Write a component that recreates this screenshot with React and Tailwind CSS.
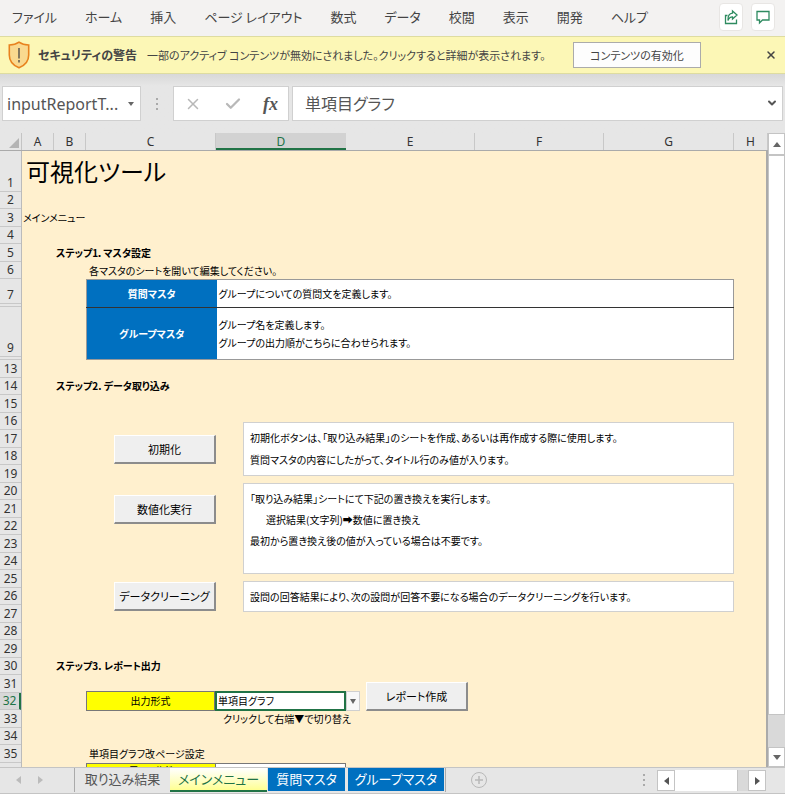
import { ChevronDown, X, Check } from 'lucide-react';

const ribbonTabs = ['ファイル', 'ホーム', '挿入', 'ページ レイアウト', '数式', 'データ', '校閲', '表示', '開発', 'ヘルプ'];

const columns = [
    { name: 'A', width: 'w-8' },
    { name: 'B', width: 'w-8' },
    { name: 'C', width: 'w-[130px]' },
    { name: 'D', width: 'w-[130px]', active: true },
    { name: 'E', width: 'w-[129px]' },
    { name: 'F', width: 'w-[129px]' },
    { name: 'G', width: 'w-[130px]' },
    { name: 'H', width: 'flex-1' },
];

// Rows 8 and 10-12 are hidden on this sheet
const rows = [
    { n: 1, height: 'h-[41px]' },
    { n: 2, height: 'h-[17px]' },
    { n: 3, height: 'h-[18px]' },
    { n: 4, height: 'h-[17px]' },
    { n: 5, height: 'h-[18px]' },
    { n: 6, height: 'h-[17px]' },
    { n: 7, height: 'h-[28px]', hiddenAfter: true },
    { n: 9, height: 'h-[53px]', hiddenAfter: true },
    ...Array.from({ length: 23 }, (_, i) => ({
        n: 13 + i,
        height: i % 2 ? 'h-[17px]' : 'h-[18px]',
        active: 13 + i === 32,
    })),
];

function Ribbon() {
    return (
        <header className="flex h-9 shrink-0 items-center bg-[#f3f2f1] pb-0.5 pl-3 pr-2.5">
            <nav className="flex flex-1 gap-7">
                {ribbonTabs.map((tab) => (
                    <button key={tab} type="button" className="whitespace-nowrap text-[13px] leading-5 text-[#444]">
                        {tab}
                    </button>
                ))}
            </nav>
            <div className="flex gap-2">
                <button type="button" aria-label="共有" className="flex h-7 w-6 items-center justify-center rounded-sm border border-[#e8e6e4] bg-white">
                    <svg viewBox="0 0 16 16" className="h-4 w-4" fill="none" stroke="#2e8b60" strokeWidth="1.3">
                        <path d="M4.500 6.500H2.500v8h11V10.500" />
                        <path d="M9.500 2 14 6 9.500 10V7.800C7.500 7.800 6 8.800 5 11.500 4.800 7.500 6.500 4.500 9.500 4.200Z" />
                    </svg>
                </button>
                <button type="button" aria-label="コメント" className="flex h-7 w-6 items-center justify-center rounded-sm border border-[#e8e6e4] bg-white">
                    <svg viewBox="0 0 16 16" className="h-4 w-4" fill="none" stroke="#2e8b60" strokeWidth="1.3">
                        <path d="M2 2.500h12v8.500H7.500L4.500 14V11H2Z" />
                    </svg>
                </button>
            </div>
        </header>
    );
}

function SecurityBar() {
    return (
        <div className="flex h-[38px] shrink-0 items-center border-y border-[#dedca0] bg-[#fcf7b6] px-2 text-[#444]">
            <svg viewBox="0 0 22 28" className="h-7 w-[22px] shrink-0">
                <path d="M11 1.200C8.500 3 5 4 1.300 4V14c0 6 4 10.500 9.700 12.800C16.700 24.500 20.700 20 20.700 14V4C17 4 13.500 3 11 1.200Z" fill="#f9d98f" stroke="#e8821e" strokeWidth="1.600" />
                <path d="M11 7v10.500M11 19v2.500" stroke="#444" strokeWidth="1.300" />
            </svg>
            <strong className="ml-2 whitespace-nowrap text-xs leading-5">セキュリティの警告</strong>
            <span className="ml-2.5 flex-1 whitespace-nowrap text-[11px] leading-5">
                一部のアクティブ コンテンツが無効にされました。クリックすると詳細が表示されます。
            </span>
            <button type="button" className="h-[26px] w-32 shrink-0 border border-[#ababab] bg-[#fdfdfd] text-[11px] leading-5">
                コンテンツの有効化
            </button>
            <button type="button" aria-label="閉じる" className="ml-16 shrink-0">
                <X className="h-3 w-3" strokeWidth={3} />
            </button>
        </div>
    );
}

function Dots() {
    return (
        <div className="flex flex-col gap-[3px]">
            <i className="h-0.5 w-0.5 bg-[#aaa]" />
            <i className="h-0.5 w-0.5 bg-[#aaa]" />
            <i className="h-0.5 w-0.5 bg-[#aaa]" />
        </div>
    );
}

function FormulaBar() {
    return (
        <div className="flex h-[59px] shrink-0 items-center bg-gradient-to-b from-[#d8d8d8] to-[#e6e6e6] to-20% px-0.5">
            <div className="flex h-[35px] w-[139px] items-center border border-[#d0d0d0] bg-white pl-1 pr-1.5">
                <input
                    aria-label="名前ボックス"
                    defaultValue="inputReportT..."
                    className="w-0 flex-1 bg-transparent font-['Noto_Sans',sans-serif] text-base text-[#555] outline-none"
                />
                <svg viewBox="0 0 6 4" className="h-1 w-1.5">
                    <path d="M0 0h6L3 4Z" fill="#666" />
                </svg>
            </div>
            <div className="flex w-8 justify-center">
                <Dots />
            </div>
            <div className="flex h-[35px] w-[116px] items-center justify-between border border-[#d0d0d0] bg-white px-2.5">
                <button type="button" aria-label="キャンセル">
                    <X className="h-[18px] w-[18px] text-[#b8b8b8]" />
                </button>
                <button type="button" aria-label="入力">
                    <Check className="h-[18px] w-[18px] text-[#b8b8b8]" strokeWidth={3} />
                </button>
                <button type="button" aria-label="関数の挿入" className="font-['Liberation_Serif',serif] text-lg font-bold italic leading-5 text-[#555]">
                    fx
                </button>
            </div>
            <div className="ml-[3px] flex h-[35px] flex-1 items-center border border-[#d0d0d0] bg-white pb-0.5 pl-3 pr-1">
                <input aria-label="数式バー" defaultValue="単項目グラフ" className="w-0 flex-1 bg-transparent text-base text-[#555] outline-none" />
                <ChevronDown className="h-3 w-3 text-[#555]" strokeWidth={4} />
            </div>
        </div>
    );
}

function ColumnHeads() {
    return (
        <div className="flex h-[18px] shrink-0 border-b border-[#aaa] font-['Noto_Sans',sans-serif] text-xs leading-[18px] text-[#333]">
            <div className="flex w-[22px] items-end justify-end border-r border-[#c4c4c4] p-0.5">
                <svg viewBox="0 0 10 10" className="h-2.5 w-2.5">
                    <path d="M10 0v10H0Z" fill="#b4b4b4" />
                </svg>
            </div>
            {columns.map((col) => (
                <div
                    key={col.name}
                    className={`${col.width} text-center ${col.active ? 'border-b-2 border-[#217346] bg-[#d2d2d2] text-[#217346]' : 'border-r border-[#c8c8c8]'}`}
                >
                    {col.name}
                </div>
            ))}
        </div>
    );
}

function RowHeads() {
    return (
        <div className="w-[22px] shrink-0 border-r border-[#bbb] font-['Noto_Sans',sans-serif] text-xs leading-4 text-[#333]">
            {rows.map((row) => (
                <div
                    key={row.n}
                    className={`${row.height} flex items-end justify-center border-[#c8c8c8] ${row.hiddenAfter ? 'border-b-4 border-double' : 'border-b'} ${row.active ? 'border-r-2 border-r-[#217346] bg-[#d8d8d8] text-[#217346]' : ''}`}
                >
                    {row.n}
                </div>
            ))}
        </div>
    );
}

function SheetButton({ children }) {
    return (
        <button
            type="button"
            className="h-[29px] w-[102px] shrink-0 whitespace-nowrap border border-b-2 border-r-2 border-white border-b-[#8c8c8c] border-r-[#8c8c8c] bg-[#efefef] text-[11px] leading-4"
        >
            {children}
        </button>
    );
}

function Note({ children }) {
    return <div className="w-[491px] shrink-0 border border-[#d0d0d0] bg-white px-1.5 py-1 leading-[21px]">{children}</div>;
}

function MasterTable() {
    return (
        <table className="ml-16 w-[648px] border-collapse border border-[#999]">
            <tbody>
                <tr className="h-7 border-b border-[#333]">
                    <th scope="row" className="w-[130px] bg-[#0070c0] text-white">質問マスタ</th>
                    <td className="bg-white pl-0.5">グループについての質問文を定義します。</td>
                </tr>
                <tr className="h-[52px]">
                    <th scope="row" className="bg-[#0070c0] text-white">グループマスタ</th>
                    <td className="bg-white pl-0.5">
                        グループ名を定義します。
                        <br />
                        グループの出力順がこちらに合わせられます。
                    </td>
                </tr>
            </tbody>
        </table>
    );
}

function Sheet() {
    return (
        <main className="min-w-0 flex-1 overflow-hidden whitespace-nowrap border-r-2 border-[#aaa] bg-[#fff0ce] text-[10px] leading-[18px] text-black">
            <h1 className="h-[58px] pl-1 text-2xl leading-10">可視化ツール</h1>
            <p className="h-[35px] pl-px">メインメニュー</p>

            <section>
                <h2 className="pl-[34px] font-bold">ステップ1．マスタ設定</h2>
                <p className="h-[17px] pl-[67px]">各マスタのシートを開いて編集してください。</p>
                <MasterTable />
            </section>

            <section className="pt-[17px]">
                <h2 className="pl-[34px] font-bold">ステップ2. データ取り込み</h2>
                <div className="flex flex-col gap-[7px] pl-[92px] pt-[27px]">
                    <div className="flex items-center gap-[27px]">
                        <SheetButton>初期化</SheetButton>
                        <Note>
                            <p className="leading-[22px]">初期化ボタンは、「取り込み結果」のシートを作成、あるいは再作成する際に使用します。</p>
                            <p className="leading-[22px]">質問マスタの内容にしたがって、タイトル行のみ値が入ります。</p>
                        </Note>
                    </div>
                    <div className="flex gap-[27px]">
                        <div className="pt-3">
                            <SheetButton>数値化実行</SheetButton>
                        </div>
                        <Note>
                            <p>「取り込み結果」シートにて下記の置き換えを実行します。</p>
                            <p className="pl-4">選択結果(文字列)➡数値に置き換え</p>
                            <p className="pb-[18px]">最初から置き換え後の値が入っている場合は不要です。</p>
                        </Note>
                    </div>
                    <div className="flex items-center gap-[27px]">
                        <SheetButton>データクリーニング</SheetButton>
                        <Note>設問の回答結果により、次の設問が回答不要になる場合のデータクリーニングを行います。</Note>
                    </div>
                </div>
            </section>

            <section className="pt-[45px]">
                <h2 className="pl-[34px] font-bold">ステップ3. レポート出力</h2>
                <div className="flex items-end pl-16 pt-[7px]">
                    <label htmlFor="format" className="h-5 w-[129px] border border-[#777] bg-[#ff0] text-center">
                        出力形式
                    </label>
                    <select id="format" className="h-5 w-[131px] appearance-none border-2 border-[#217346] bg-white pl-px leading-4 outline-none">
                        <option>単項目グラフ</option>
                    </select>
                    <span className="mr-1.5 flex h-5 w-3.5 items-center justify-center border border-[#d0d0d0] bg-[#f8f8f8]">
                        <svg viewBox="0 0 6 5" className="h-[5px] w-1.5">
                            <path d="M0 0h6L3 5Z" fill="#666" />
                        </svg>
                    </span>
                    <SheetButton>レポート作成</SheetButton>
                </div>
                <p className="pl-[201px] leading-4">クリックして右端▼で切り替え</p>
                <p className="pl-[67px] pt-[18px]">単項目グラフ改ページ設定</p>
                <div className="flex pl-16 leading-3">
                    <div className="h-5 w-[130px] border border-[#777] bg-[#ff0] text-center">フィールド</div>
                    <div className="h-5 w-[130px] border border-l-0 border-[#777] bg-white" />
                </div>
            </section>
        </main>
    );
}

function VerticalScroll() {
    return (
        <div className="flex w-[17px] shrink-0 flex-col bg-[#d9d9d9]">
            <button type="button" aria-label="上へ" className="flex h-[22px] items-center justify-center border border-[#c4c4c4] bg-white">
                <svg viewBox="0 0 8 5" className="h-[5px] w-2">
                    <path d="M4 0 8 5H0Z" fill="#666" />
                </svg>
            </button>
            <div className="flex-1 border border-[#c4c4c4] bg-white" />
            <div className="h-8" />
            <button type="button" aria-label="下へ" className="flex h-5 items-center justify-center border border-[#c4c4c4] bg-white">
                <svg viewBox="0 0 8 5" className="h-[5px] w-2">
                    <path d="M0 0h8L4 5Z" fill="#666" />
                </svg>
            </button>
        </div>
    );
}

function SheetTabs() {
    return (
        <footer className="flex h-[27px] shrink-0 items-start border-y border-[#c4c4c4] bg-[#e6e6e6] pr-[19px] text-[13px] leading-5">
            <div className="flex h-6 w-[75px] items-center gap-[17px] border-r border-[#aaa] pl-4">
                <svg viewBox="0 0 5 8" className="h-2 w-[5px]">
                    <path d="M5 0v8L0 4Z" fill="#bbb" />
                </svg>
                <svg viewBox="0 0 5 8" className="h-2 w-[5px]">
                    <path d="M0 0v8l5-4Z" fill="#bbb" />
                </svg>
            </div>
            <button type="button" className="h-[23px] w-[95px] pb-0.5 text-[#555]">取り込み結果</button>
            <button type="button" className="h-6 w-[97px] border-b-2 border-[#217346] bg-gradient-to-b from-white to-[#ffff90] text-[#217346]">
                メインメニュー
            </button>
            <button type="button" className="ml-px h-[23px] w-[77px] bg-[#0070c0] pb-0.5 text-white">質問マスタ</button>
            <button type="button" className="ml-[3px] h-[23px] w-24 bg-[#0070c0] pb-0.5 text-white">グループマスタ</button>
            <div className="ml-px flex h-6 flex-1 items-center border-l border-[#aaa] pl-6">
                <button type="button" aria-label="新しいシート">
                    <svg viewBox="0 0 18 18" className="h-[18px] w-[18px]" fill="none" stroke="#b8b8b8">
                        <circle cx="9" cy="9" r="7.500" />
                        <path d="M9 5v8M5 9h8" strokeWidth="1.500" />
                    </svg>
                </button>
            </div>
            <div className="flex h-6 items-center pr-3">
                <Dots />
            </div>
            <div className="mt-0.5 flex h-[21px] w-[109px] bg-[#d9d9d9]">
                <button type="button" aria-label="左へ" className="flex w-[18px] items-center justify-center border border-[#c4c4c4] bg-white">
                    <svg viewBox="0 0 5 8" className="h-2 w-[5px]">
                        <path d="M5 0v8L0 4Z" fill="#555" />
                    </svg>
                </button>
                <div className="mr-2.5 flex-1 border-r border-[#c4c4c4] bg-white" />
                <button type="button" aria-label="右へ" className="flex w-[18px] items-center justify-center border border-[#c4c4c4] bg-white">
                    <svg viewBox="0 0 5 8" className="h-2 w-[5px]">
                        <path d="M0 0v8l5-4Z" fill="#555" />
                    </svg>
                </button>
            </div>
        </footer>
    );
}

export default function App() {
    return (
        <div className="flex h-screen flex-col overflow-hidden bg-[#e6e6e6] font-['Noto_Sans_CJK_JP',sans-serif] [font-feature-settings:'palt']">
            <Ribbon />
            <SecurityBar />
            <FormulaBar />
            <div className="flex min-h-0 flex-1">
                <div className="flex min-w-0 flex-1 flex-col">
                    <ColumnHeads />
                    <div className="flex min-h-0 flex-1 overflow-hidden">
                        <RowHeads />
                        <Sheet />
                    </div>
                </div>
                <VerticalScroll />
            </div>
            <SheetTabs />
        </div>
    );
}
